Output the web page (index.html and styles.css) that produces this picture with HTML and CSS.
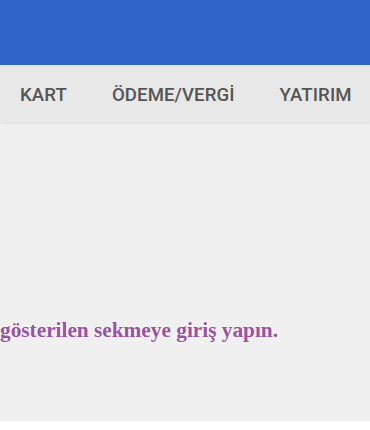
FILE: index.html
```html
<!DOCTYPE html>
<html lang="tr">
<head>
<meta charset="utf-8">
<link rel="stylesheet" href="styles.css">
</head>
<body>
<div class="app">
  <header class="topbar"></header>
  <nav class="tabs">
    <span class="tab">KART</span>
    <span class="tab">ÖDEME/VERGİ</span>
    <span class="tab">YATIRIM</span>
  </nav>
  <main class="content">
    <p class="notice">gösterilen sekmeye giriş yapın.</p>
  </main>
</div>
</body>
</html>
```
FILE: styles.css
```css
html {
  background: #ffffff;
}
body {
  margin: 0;
  overflow: hidden;
}
.app {
  height: 421px;
  background: #f0f0f0;
  display: flex;
  flex-direction: column;
  overflow: hidden;
}
.topbar {
  height: 65px;
  background: #3166c9;
  flex: none;
}
.tabs {
  height: 57px;
  flex: none;
  background: #e8e8e8;
  display: flex;
  align-items: center;
  gap: 45px;
  padding: 2px 0 0 20px;
  box-sizing: border-box;
  box-shadow: 0 2px 2px rgba(0, 0, 0, 0.06);
  position: relative;
  white-space: nowrap;
}
.tab {
  font-family: Roboto, "Noto Sans", sans-serif;
  font-weight: 500;
  font-size: 18.6px;
  color: #555555;
  letter-spacing: 0.1px;
}
.content {
  flex: 1;
  display: flex;
  flex-direction: column;
}
.notice {
  margin: 196px 0 0 0;
  white-space: nowrap;
  font-family: "Liberation Serif", "Times New Roman", serif;
  font-weight: bold;
  font-size: 21.3px;
  line-height: 24px;
  color: #9b52a3;
  text-shadow: 0 0 3px #fafafa, 0 0 2px #fafafa;
}
```
